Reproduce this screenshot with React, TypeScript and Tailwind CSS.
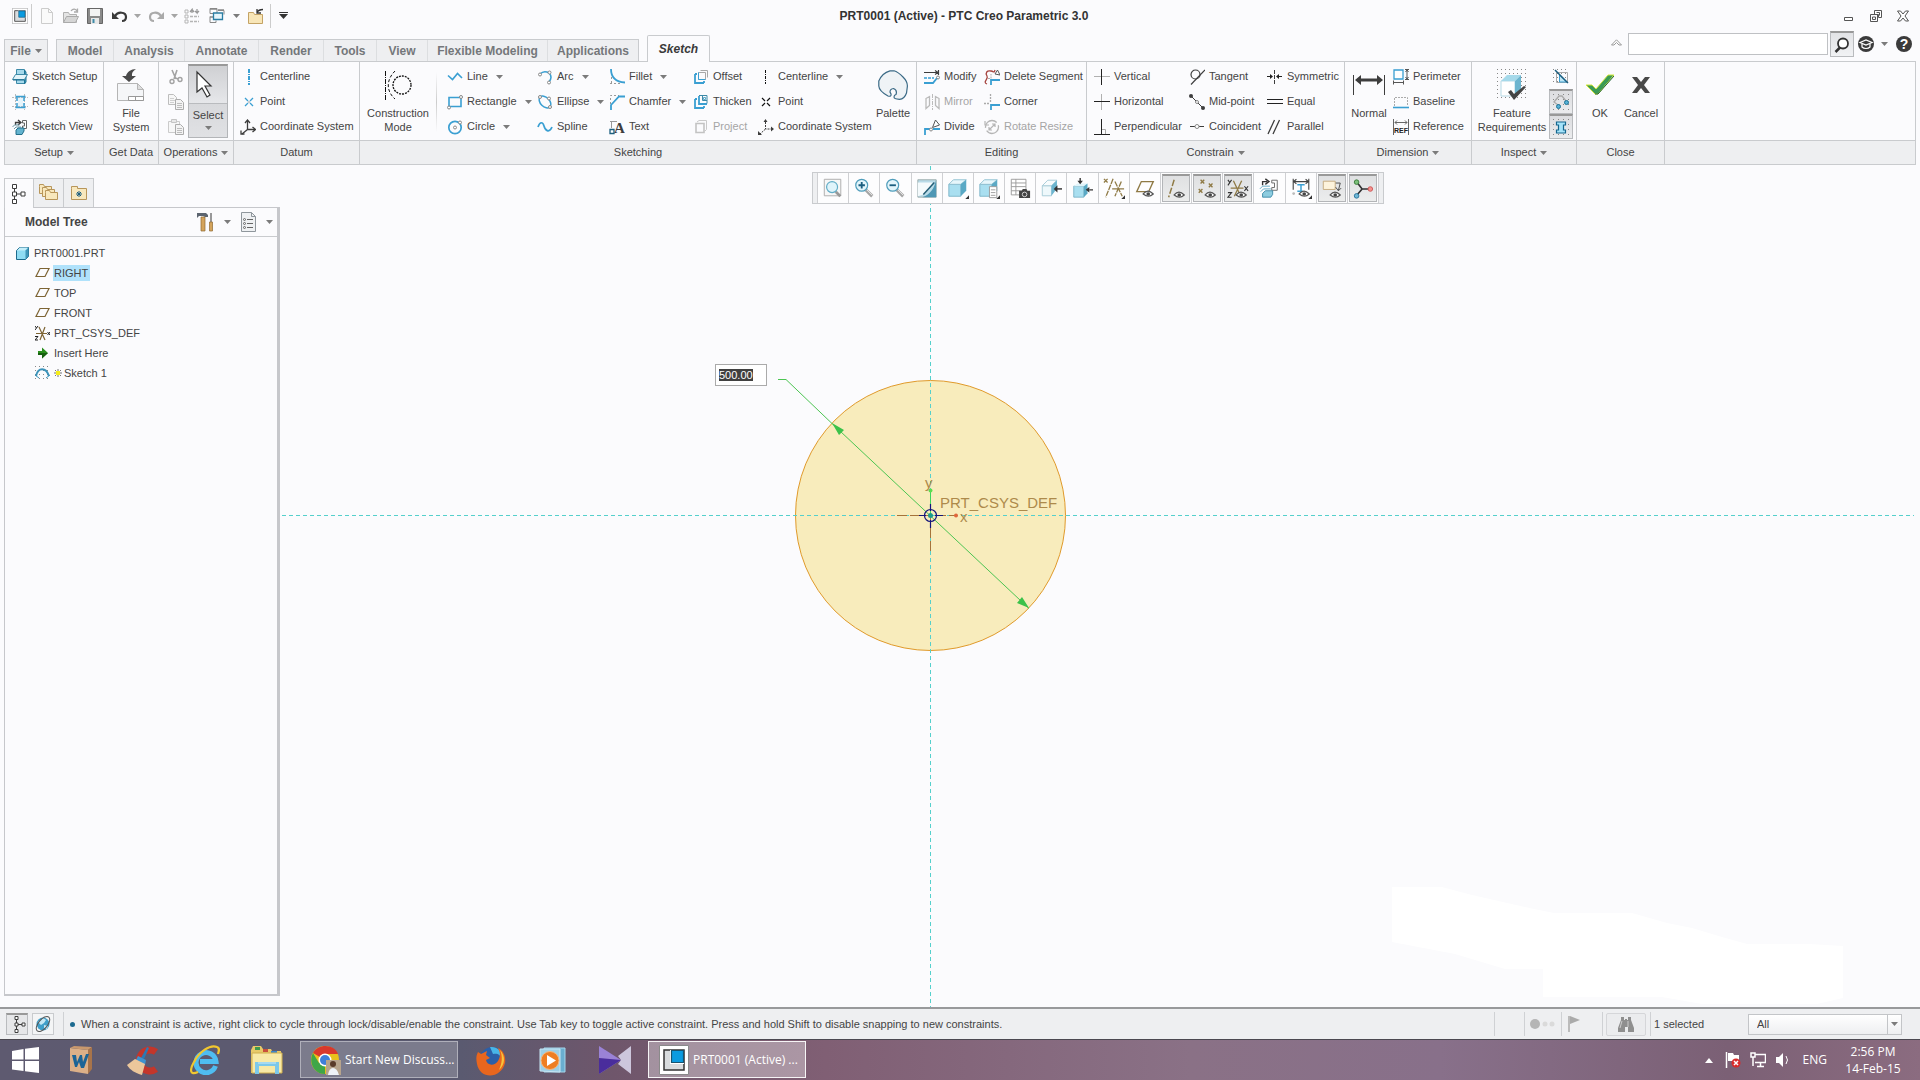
import React, { useEffect, useRef } from 'react';

type Children = { children?: React.ReactNode };

/* ---------- Shared drawing helpers ---------- */

const Svg: React.FC<Children & { w?: number; h?: number }> = ({ w = 16, h = w, children }) => (
  <svg width={w} height={h} viewBox={`0 0 ${w} ${h}`} fill="none" className="block shrink-0" aria-hidden="true">
    {children}
  </svg>
);

const Caret: React.FC<{ light?: boolean }> = ({ light }) => (
  <Svg w={7} h={4}>
    <path d="M0 0h7L3.5 4z" fill={light ? '#a5a5a5' : '#7b7b7b'} />
  </Svg>
);

const BLUE = '#3a9fd2';
const DARK = '#3d3d3d';
const GRAY = '#a3a3a3';

/* ---------- 16px ribbon icons ---------- */

const icons = {
  sketchSetup: (
    <Svg>
      <path d="M4.5.5h8v14h-8z" fill="#a5d9ec" stroke="#3d8aa8" />
      <path d="M12.5 1l1.5 2v10l-1.500 2z" fill="#4b9fbd" stroke="#1d7597" />
      <path d="M3.5 5.5h12l-3 5H.5z" fill="#e3f4fa" stroke="#3d8aa8" />
      <path d="M1 11h11" stroke="#1d6b8d" />
    </Svg>
  ),
  references: (
    <Svg>
      <path d="M0 3.5h16M0 12.5h16M3.5 0v16M12.5 0v16" stroke="#bbb" strokeDasharray="2 1" />
      <path d="M3.5 2.5h10M3.5 13.5h10M5 3v4M5 9v5M12 3v4M12 9v5" stroke={BLUE} strokeWidth="1.500" />
      <path d="M6 4h5v8H6z" fill="#e6f4fb" />
    </Svg>
  ),
  sketchView: (
    <Svg>
      <path d="M3.5 6V3.5H8M6 1l3 2.5L6 6" stroke={DARK} strokeWidth="1.300" />
      <path d="M10.5 1.5h4v8h-4V7h2V4h-2z" fill="#fff" stroke="#666" />
      <path d="M.5 8l2-2h5M2 10l2-2h5" stroke="#6d97a5" />
      <path d="M4 11l2-2h6v3l-2 3.500H4z" fill="#63b3cf" stroke="#236f8a" />
    </Svg>
  ),
  cut: (
    <Svg>
      <path d="M4 1l4 9M9 1L6 10" stroke={GRAY} strokeWidth="1.600" />
      <circle cx="4" cy="12.500" r="2" stroke={GRAY} strokeWidth="1.400" />
      <circle cx="12" cy="10.500" r="2" stroke={GRAY} strokeWidth="1.400" />
      <path d="M7 9l3.5 1" stroke={GRAY} strokeWidth="1.500" />
    </Svg>
  ),
  copy: (
    <Svg>
      <path d="M.5.5h5l3 3v7h-8z" fill="#f7f7f7" stroke="#bdbdbd" />
      <path d="M2 4.5h4M2 6.5h5M2 8.500h4" stroke="#cfcfcf" />
      <path d="M7.500 5.5h5l3 3v7h-8z" fill="#f3f3f3" stroke="#acacac" />
      <path d="M9 9.500h5M9 11.500h5M9 13.500h5" stroke="#bdbdbd" />
    </Svg>
  ),
  paste: (
    <Svg>
      <path d="M.5 2.500h11v11H.5z" fill="#f7f7f7" stroke="#cbcbcb" />
      <path d="M3.500.5h5v3h-5z" fill="#e8e8e8" stroke="#c5c5c5" />
      <path d="M7.500 5.500h5l3 3v7h-8z" fill="#f3f3f3" stroke="#acacac" />
      <path d="M9 9.500h5M9 11.500h5M9 13.500h5" stroke="#bdbdbd" />
    </Svg>
  ),
  centerline: (
    <Svg>
      <path d="M9 0v16" stroke={BLUE} strokeWidth="2" strokeDasharray="4 1 1 1" />
    </Svg>
  ),
  point: (
    <Svg>
      <path d="M5 4l3 3M13 4l-3 3M5 12l3-3M13 12l-3-3" stroke={BLUE} strokeWidth="1.300" />
      <path d="M8.500 7.500h1v1h-1z" fill={DARK} />
    </Svg>
  ),
  csys: (
    <Svg>
      <path d="M7.500 2v8.500H15M7.500 10.500L2 15" stroke={DARK} strokeWidth="1.300" />
      <path d="M5 4l2.500-3L10 4M12.500 8l3 2.500-3 2.500M1 11.500V15h3.500" stroke={DARK} strokeWidth="1.300" />
    </Svg>
  ),
  line: (
    <Svg>
      <path d="M1 6.500l4.500 4 5-6L15 9" stroke={BLUE} strokeWidth="1.600" />
    </Svg>
  ),
  rectangle: (
    <Svg>
      <path d="M2 3.500h12v9H2z" stroke={BLUE} strokeWidth="1.600" />
      <circle cx="2" cy="13.500" r="1.500" fill="#fff" stroke="#888" />
      <circle cx="14" cy="3" r="1.500" fill="#fff" stroke="#888" />
    </Svg>
  ),
  circle: (
    <Svg>
      <circle cx="8" cy="8.500" r="6.200" stroke={BLUE} strokeWidth="1.700" />
      <circle cx="8" cy="8.500" r="1.500" stroke="#888" />
      <circle cx="13" cy="3.500" r="1.500" fill="#fff" stroke="#888" />
    </Svg>
  ),
  arc: (
    <Svg>
      <path d="M3 5Q7 1 12 4q4 4 0 9" stroke={BLUE} strokeWidth="1.500" />
      <circle cx="3" cy="5.500" r="1.500" fill="#fff" stroke="#888" />
      <circle cx="12.500" cy="3.500" r="1.500" fill="#fff" stroke="#888" />
      <circle cx="12" cy="13.500" r="1.500" fill="#fff" stroke="#888" />
    </Svg>
  ),
  ellipse: (
    <Svg>
      <ellipse cx="8" cy="8" rx="7" ry="4.500" transform="rotate(45 8 8)" stroke={BLUE} strokeWidth="1.500" />
      <circle cx="3" cy="3" r="1.500" fill="#fff" stroke="#888" />
      <circle cx="12" cy="4.500" r="1.500" fill="#fff" stroke="#888" />
      <circle cx="13" cy="13" r="1.500" fill="#fff" stroke="#888" />
    </Svg>
  ),
  spline: (
    <Svg>
      <path d="M1 8c2-6 5-5 6-1s5 8 8 1" stroke={BLUE} strokeWidth="1.700" />
    </Svg>
  ),
  fillet: (
    <Svg>
      <path d="M2.500 4v12M1 14.500h10" stroke="#999" strokeDasharray="2 2" />
      <path d="M2 0c0 8 4 13 14 13.500" stroke={BLUE} strokeWidth="1.800" />
    </Svg>
  ),
  chamfer: (
    <Svg>
      <path d="M1.500 10V1.500H10" stroke="#999" strokeDasharray="2 2" />
      <path d="M2 16v-5l8-8.500h6" stroke={BLUE} strokeWidth="1.800" />
    </Svg>
  ),
  text: (
    <Svg>
      <path d="M2.500 9V2.500H8M1 2.500h3" stroke="#999" />
      <text x="5" y="14" fontSize="15" fontWeight="700" fill={DARK} className="font-['Liberation_Serif',serif]">A</text>
      <path d="M1 10.500h4v4H1z" fill="#fff" stroke="#1c5f80" strokeWidth="1.300" />
    </Svg>
  ),
  offset: (
    <Svg>
      <path d="M2 5v9h9M2 5h2M11 14v-2" stroke={BLUE} strokeWidth="1.800" />
      <path d="M5.500 3.500h7v7h-7zM7.500 1.500h7v7" stroke="#a8a8a8" />
      <path d="M5.500 3.500v7h7" stroke={BLUE} />
    </Svg>
  ),
  thicken: (
    <Svg>
      <path d="M2 5v9h9M2 5h2M11 14v-2M6 2v8h8" stroke={BLUE} strokeWidth="1.800" />
      <path d="M6 1.500h8v8M9.500 2v4.500H14" stroke="#3d8aa8" />
      <path d="M10.500 3.500h2v2h-2z" fill="#fff" stroke="#5ba8c7" />
    </Svg>
  ),
  project: (
    <Svg>
      <path d="M3 4.500h8v9H3z" stroke="#c3c3c3" strokeWidth="1.600" />
      <path d="M4 3l2-1.500h7.500v9l-2 2" stroke="#cacaca" />
    </Svg>
  ),
  centerlineDark: (
    <Svg>
      <path d="M7.500 1v14" stroke="#111" strokeDasharray="3 1 1 1" />
    </Svg>
  ),
  pointDark: (
    <Svg>
      <path d="M4 4l3 3M12 4L9 7M4 12l3-3M12 12L9 9" stroke="#111" strokeWidth="1.200" />
    </Svg>
  ),
  csysDark: (
    <Svg>
      <path d="M7.500 3v7H14M7.500 10L2 15" stroke={DARK} strokeDasharray="2 1" />
      <path d="M5.500 3l2-3 2 3zM13 7.500l3 2.500-3 2.500zM0 16v-4l4 4z" fill={DARK} />
    </Svg>
  ),
  modify: (
    <Svg>
      <path d="M0 3.500h14M14.500 1v5M11 1.500l3 2-3 2" stroke={DARK} strokeWidth="1.200" />
      <path d="M0 9h10" stroke={BLUE} strokeWidth="1.300" strokeDasharray="3 1" />
      <path d="M0 14h9l4-5" stroke={BLUE} strokeWidth="1.800" />
      <circle cx="14" cy="8.500" r="1.500" stroke="#888" />
    </Svg>
  ),
  mirror: (
    <Svg>
      <path d="M8.500 0v16" stroke="#bbb" strokeDasharray="4 1 1 1" />
      <path d="M2 4.500l3.500-2v9l-3.500 3zM15 4.500l-3.500-2v9l3.500 3z" stroke="#bbb" strokeWidth="1.300" />
    </Svg>
  ),
  divide: (
    <Svg>
      <path d="M1 16v-6h5M9 10h7" stroke={BLUE} strokeWidth="1.800" />
      <circle cx="7" cy="10.500" r="1.500" fill="#fff" stroke="#888" />
      <path d="M8.500 8.500l3-7.500 4 5z" fill="#fff" stroke="#555" />
    </Svg>
  ),
  deleteSegment: (
    <Svg>
      <path d="M3 15c-5-2 2-5 0-8s0-6 4-5 3 2 4-1" stroke="#a6443f" strokeWidth="1.300" />
      <path d="M7 16v-5h9" stroke={BLUE} strokeWidth="1.800" />
      <path d="M4 9.500h3V5" stroke="#aaa" strokeDasharray="2 1" />
      <path d="M11 5l2.500-4L16 6z" fill="#fff" stroke="#555" />
    </Svg>
  ),
  corner: (
    <Svg>
      <path d="M6.500 0v8M0 9.500h6" stroke="#aaa" strokeWidth="1.300" strokeDasharray="2 1" />
      <path d="M7 16v-5h9" stroke={BLUE} strokeWidth="1.800" />
    </Svg>
  ),
  rotateResize: (
    <Svg>
      <circle cx="8" cy="8" r="6.500" stroke="#b5b5b5" strokeWidth="1.300" strokeDasharray="16 3" />
      <path d="M5 11l6-6M5 8v3h3M11 8V5H8M1 2v4h4" stroke="#b5b5b5" strokeWidth="1.200" />
    </Svg>
  ),
  vertical: (
    <Svg>
      <path d="M0 7.500h16" stroke="#b0b0b0" />
      <path d="M7.500 0v16" stroke="#222" />
    </Svg>
  ),
  horizontal: (
    <Svg>
      <path d="M7.500 0v16" stroke="#b0b0b0" />
      <path d="M0 7.500h16" stroke="#222" />
    </Svg>
  ),
  perpendicular: (
    <Svg>
      <path d="M7.500 0v15M0 15.500h16" stroke="#222" />
      <path d="M8 10.500h3.500V15" stroke="#aaa" />
    </Svg>
  ),
  tangent: (
    <Svg>
      <circle cx="6.500" cy="5.500" r="4.500" stroke={DARK} strokeWidth="1.200" />
      <path d="M2 15.500L16 1" stroke={DARK} strokeWidth="1.200" />
    </Svg>
  ),
  midpoint: (
    <Svg>
      <path d="M2 2l12 12" stroke={DARK} />
      <circle cx="2" cy="2" r="2" fill={DARK} />
      <circle cx="14" cy="14" r="2" fill={DARK} />
      <circle cx="8" cy="8" r="1.500" fill="#fff" stroke="#888" />
    </Svg>
  ),
  coincident: (
    <Svg>
      <path d="M1 7.500h14" stroke={DARK} />
      <circle cx="8" cy="7.500" r="2" fill="#fff" stroke="#888" />
    </Svg>
  ),
  symmetric: (
    <Svg>
      <path d="M7.500 1v14" stroke={DARK} strokeDasharray="4 1" />
      <path d="M0 7.500h5M10 7.500h5" stroke="#222" />
      <path d="M3 5l3 2.500L3 10zM12 5L9 7.500l3 2.500z" fill="#222" />
    </Svg>
  ),
  equal: (
    <Svg>
      <path d="M0 5.500h16M0 9.500h16" stroke="#222" />
    </Svg>
  ),
  parallel: (
    <Svg>
      <path d="M1 15L7.500 1M6 15l6.500-14" stroke={DARK} strokeWidth="1.300" />
    </Svg>
  ),
  perimeter: (
    <Svg>
      <path d="M1 1h9v9H1z" fill="#fff" stroke={BLUE} strokeWidth="1.300" />
      <path d="M14 1v9M12 .5h4M12 10.500h4M12.500 3L14 1l1.500 2M12.500 8l1.500 2 1.500-2M1 13.500h9M.5 11.500v4M10.500 11.500v4" stroke="#555" />
    </Svg>
  ),
  baseline: (
    <Svg>
      <path d="M1.500 12V3.500h13V12" stroke="#aaa" strokeDasharray="2 1" />
      <path d="M0 13.500h16" stroke={BLUE} strokeWidth="1.600" />
    </Svg>
  ),
  reference: (
    <Svg>
      <path d="M.5 0v16M15.500 0v16M2 3.500h12M4 1.500l-2 2 2 2M12 1.500l2 2-2 2" stroke="#666" />
      <text x="1" y="14" fontSize="7" fontWeight="700" fill="#222" className="font-['Liberation_Sans',sans-serif]">REF</text>
    </Svg>
  ),
};

const Dots: React.FC<{ n: number; step: number }> = ({ n, step }) => (
  <g fill="#888">
    {Array.from({ length: n * n }, (_, i) => (
      <rect key={i} x={(i % n) * step} y={Math.floor(i / n) * step} width="1" height="1" />
    ))}
  </g>
);

/* ---------- Ribbon building blocks ---------- */

type Item = { icon: keyof typeof icons; label: string; menu?: boolean; disabled?: boolean };

const Column: React.FC<{ items: Item[]; className: string }> = ({ items, className }) => (
  <div className={`flex shrink-0 flex-col ${className}`}>
    {items.map((item) => (
      <button
        key={item.label}
        disabled={item.disabled}
        className="flex h-[25px] items-center gap-1 whitespace-nowrap text-left text-[#444] disabled:text-[#a5a5a5]"
      >
        {icons[item.icon]}
        <span>{item.label}</span>
        {item.menu && <span className="ml-1"><Caret /></span>}
      </button>
    ))}
  </div>
);

const BigButton: React.FC<Children & { lines: string[]; className: string }> = ({ lines, className, children }) => (
  <button className={`flex shrink-0 flex-col items-center leading-[14px] text-[#444] ${className}`}>
    <span className="flex h-[42px] items-center justify-center">{children}</span>
    {lines.map((l) => (
      <span key={l} className="whitespace-nowrap">{l}</span>
    ))}
  </button>
);

const Group: React.FC<Children & { title: string; menu?: boolean; className: string; body?: string }> = ({
  title,
  menu,
  className,
  body = '',
  children,
}) => (
  <section className={`flex shrink-0 flex-col border-r border-[#c9cbce] ${className}`}>
    <div className={`flex h-[78px] pt-[2px] ${body}`}>{children}</div>
    <button className="flex h-[24px] items-center justify-center gap-1 border-t border-[#c9cbce] bg-[#eeeff1] text-[#444]">
      {title}
      {menu && <Caret />}
    </button>
  </section>
);

/* ---------- Title bar ---------- */

const AppLogo: React.FC<{ size?: number }> = ({ size = 16 }) => (
  <svg width={size} height={size} viewBox="0 0 30 30" className="block shrink-0" aria-hidden="true">
    <path d="M.5.5h29v29H.5z" fill="#fff" stroke="#8a8a8a" />
    <path d="M5 5h20v20H5z" fill="#d8dbdd" stroke="#333" strokeWidth="1.500" />
    <path d="M11 5h14v14H11z" fill="#fff" />
    <path d="M12.500 5.500h12v12h-12z" fill="#0a9be0" stroke="#17536f" strokeWidth="1.200" />
  </svg>
);

const TitleBar = () => (
  <header className="grid h-[31px] shrink-0 grid-cols-[1fr_auto_1fr] items-center pl-3 pr-1">
    <div className="flex items-center">
      <AppLogo />
      <span className="mx-[3px] h-6 w-px bg-[#ccc]" />
      <button className="flex w-6 justify-center" title="New">
        <Svg>
          <path d="M2.500.5h7l4 4v11h-11z" fill="#fafafa" stroke="#ccc" />
          <path d="M9.500.5v4h4" stroke="#ccc" />
        </Svg>
      </button>
      <button className="flex w-6 justify-center" title="Open">
        <Svg>
          <path d="M.5 4.500h5l1 2h7v8H.5z" fill="#e4e4e4" stroke="#b0b0b0" />
          <path d="M3.500 8.500h12l-3 6H.5z" fill="#d5d5d5" stroke="#aaa" />
          <path d="M8 3c2-3 5-2 6 0M14.500.5V4H11" stroke="#aaa" strokeWidth="1.300" />
        </Svg>
      </button>
      <button className="flex w-6 justify-center" title="Save">
        <Svg>
          <path d="M.5.5h15v15H.5z" fill="#8a8a8a" stroke="#666" />
          <path d="M3 1h10v7H3z" fill="#f3f3f3" />
          <path d="M4 10h8v6H4z" fill="#e8e8e8" />
          <path d="M5.500 11h2v4h-2z" fill="#3e8aa8" />
        </Svg>
      </button>
      <button className="flex w-[25px] justify-center" title="Undo">
        <Svg>
          <path d="M3 8c3-5 11-4 11 1 0 3-2 4-4 4" stroke="#3a3a3a" strokeWidth="2.200" />
          <path d="M0 4v7h7z" fill="#3a3a3a" />
        </Svg>
      </button>
      <button className="flex w-[10px] justify-center" title="Undo list"><Caret light /></button>
      <button className="flex w-7 justify-center" title="Redo">
        <Svg>
          <path d="M13 8C10 3 2 4 2 9c0 3 2 4 4 4" stroke="#aaa" strokeWidth="2.200" />
          <path d="M16 4v7H9z" fill="#aaa" />
        </Svg>
      </button>
      <button className="flex w-2 justify-center" title="Redo list"><Caret light /></button>
      <button className="flex w-7 justify-center" title="Regenerate">
        <Svg>
          <path d="M1 2h3v3H1zM1 7h3v3H1zM1 12h3v3H1z" stroke="#b5b5b5" />
          <path d="M6 8.500h9M6 13.500h9" stroke="#b5b5b5" strokeWidth="1.500" strokeDasharray="3 1" />
          <path d="M8 5V1.500L6 4M8 1.500L10 4M13 1v4l-2-2M13 5l2-2" stroke="#999" strokeWidth="1.300" />
        </Svg>
      </button>
      <button className="flex w-[22px] justify-center" title="Windows">
        <Svg>
          <path d="M1 .5h7v5H1zM9 2.500h6v4M1 8.500v6h6v-2" stroke="#888" />
          <path d="M1 1h7M9 2h6M1 9h3" stroke="#888" strokeWidth="1.500" />
          <path d="M4.500 5h9v6.500h-9z" fill="#e6f5fb" stroke="#2a7da3" strokeWidth="1.300" />
        </Svg>
      </button>
      <button className="flex w-4 justify-center" title="Window list"><Caret /></button>
      <button className="flex w-6 justify-center" title="Close window">
        <Svg>
          <path d="M.5 4.500h5l1 2h8v9H.5z" fill="#f8e6b8" stroke="#c4a365" />
          <path d="M9 4.500c1-2 3-3 6-3M9 1v4h4" stroke="#333" strokeWidth="1.300" />
        </Svg>
      </button>
      <span className="ml-0.5 h-6 w-px bg-[#ccc]" />
      <button className="flex w-6 justify-center" title="Customize">
        <Svg w={9} h={7}>
          <path d="M0 .5h9" stroke="#333" />
          <path d="M0 2h9L4.500 7z" fill="#333" />
        </Svg>
      </button>
    </div>
    <h1 className="text-xs font-bold text-[#333]">PRT0001 (Active) - PTC Creo Parametric 3.0</h1>
    <div className="flex items-center justify-end">
      <button className="flex w-[27px] justify-center" title="Minimize">
        <Svg w={10} h={10}><path d="M.5 6.500h8v3h-8z" fill="#fff" stroke="#555" /></Svg>
      </button>
      <button className="flex w-[27px] justify-center" title="Restore">
        <Svg w={12}>
          <path d="M4.500.5h7v7h-3v-3h-4z" fill="#fff" stroke="#555" />
          <path d="M.5 4.500h7v7h-7zM2.500 7h3v2.500h-3z" stroke="#555" />
          <path d="M6.500 2.500h3v3" stroke="#555" />
        </Svg>
      </button>
      <button className="flex w-[27px] justify-center" title="Close">
        <Svg w={12}>
          <path d="M.5 1h3L6 4l2.500-3h3L8 6l3.500 5h-3L6 8l-2.500 3h-3L4 6z" fill="#fff" stroke="#555" />
        </Svg>
      </button>
    </div>
  </header>
);

const TABS = [
  { label: 'Model', w: 'w-[57px]' },
  { label: 'Analysis', w: 'w-[71px]' },
  { label: 'Annotate', w: 'w-[74px]' },
  { label: 'Render', w: 'w-[65px]' },
  { label: 'Tools', w: 'w-[53px]' },
  { label: 'View', w: 'w-[51px]' },
  { label: 'Flexible Modeling', w: 'w-[120px]' },
  { label: 'Applications', w: 'w-[90px]' },
];

const TabRow = () => (
  <div className="mx-1 flex h-[30px] shrink-0 items-end text-xs font-bold text-[#74777a]">
    <button className="flex h-[22px] w-11 items-center justify-center gap-1 border-x border-t border-[#c9cbce] bg-[#eeeff1]">
      File <Caret />
    </button>
    <nav className="ml-2 flex border-x border-t border-[#c9cbce] bg-[#eeeff1]">
      {TABS.map((t) => (
        <button key={t.label} className={`h-[21px] border-r border-[#dcdee0] last:border-r-0 ${t.w}`}>
          {t.label}
        </button>
      ))}
    </nav>
    <button className="relative z-10 ml-2 -mb-px h-[27px] w-[63px] rounded-t-xs border-x border-t border-[#c9cbce] bg-[#fbfbfd] text-[#3a3a3a] italic">
      Sketch
    </button>
    <div className="ml-auto flex items-center self-center pb-1">
      <button className="px-1.5 pb-1" title="Minimize the ribbon">
        <Svg w={11} h={7}>
          <path d="M.5 6L5.500.8 10.500 6H8L5.500 3.500 3 6z" fill="#fff" stroke="#999" />
        </Svg>
      </button>
      <input aria-label="Command search" className="h-[22px] w-[200px] border border-[#bfc1c4] bg-white px-1 text-[11px] font-normal outline-none" />
      <button title="Search" className="ml-0.5 flex h-[26px] w-6 items-center justify-center border border-t-2 border-[#b9bbbe] border-t-[#999] bg-gradient-to-b from-[#e2e3e6] to-[#f1f2f4]">
        <Svg>
          <circle cx="9" cy="6.500" r="5" fill="#fff" stroke="#333" strokeWidth="1.800" />
          <path d="M6 10.500L1.500 15" stroke="#333" strokeWidth="2.500" />
        </Svg>
      </button>
      <button title="Learning Connector" className="ml-1 flex">
        <Svg>
          <circle cx="8" cy="8" r="8" fill="#3b3b3b" />
          <path d="M2 6.500L8 4l6 2.500L8 9z" stroke="#fff" strokeWidth="1.200" />
          <path d="M4 8v3c2 2 6 2 8 0V8" stroke="#fff" strokeWidth="1.200" />
        </Svg>
      </button>
      <button title="Learning menu" className="flex w-5 justify-center"><Caret /></button>
      <button title="Help" className="mr-1 ml-0.5 flex h-4 w-4 items-center justify-center rounded-full bg-[#3b3b3b] text-sm text-white">?</button>
    </div>
  </div>
);

/* ---------- Ribbon ---------- */

const SmallIcon: React.FC<Children & { title: string; pressed?: boolean }> = ({ title, pressed, children }) => (
  <button
    title={title}
    className={
      pressed
        ? 'flex h-[25px] w-6 items-center justify-center border border-t-2 border-[#b9bbbe] border-t-[#999] bg-gradient-to-b from-[#dcdde0] to-[#ebecee]'
        : 'flex h-[25px] w-6 items-center justify-center'
    }
  >
    {children}
  </button>
);

const Ribbon = () => (
  <div className="mx-1 flex shrink-0 overflow-hidden border border-[#c9cbce]">
    <Group title="Setup" menu className="w-[99px]" body="pl-[7px]">
      <Column
        className="w-[88px]"
        items={[
          { icon: 'sketchSetup', label: 'Sketch Setup' },
          { icon: 'references', label: 'References' },
          { icon: 'sketchView', label: 'Sketch View' },
        ]}
      />
    </Group>
    <Group title="Get Data" className="w-[55px]" body="justify-center">
      <BigButton lines={['File', 'System']} className="w-12">
        <Svg w={30} h={32}>
          <path d="M6 7h4C11 3 15 0 20 0c-4 3-4 4-4 7h4l-7 6z" fill="#4a4a4a" />
          <path d="M1.500 14.500h20l6 6v11h-26z" fill="#f5f6f8" stroke="#b5b5b5" />
          <path d="M21.500 14.500l6 6h-6z" fill="#ddd" stroke="#b5b5b5" />
          <path d="M12.500 27.500h15v4h-15zM19.500 27.500v4" fill="#fff" stroke="#999" />
        </Svg>
      </BigButton>
    </Group>
    <Group title="Operations" menu className="w-[75px]" body="justify-end gap-1 pr-[5px]">
      <div className="flex flex-col">
        {(['cut', 'copy', 'paste'] as const).map((k) => (
          <button key={k} title={k} disabled className="flex h-[25px] w-4 items-center">{icons[k]}</button>
        ))}
      </div>
      <button className="flex h-[74px] w-10 flex-col items-center border border-t-2 border-[#b3b5b8] border-t-[#999] bg-gradient-to-b from-[#cfd0d3] to-[#e0e1e4] text-[#444]">
        <span className="flex h-[38px] w-full items-center justify-center border-b border-[#b9bbbe] bg-gradient-to-b from-[#cfd0d3] to-[#e6e7ea] pr-2">
          <Svg w={18} h={29}>
            <path d="M2 2v20l5-4 5 9 3-2-5-9h6z" fill="#fff" stroke="#333" strokeWidth="1.200" />
          </Svg>
        </span>
        <span className="pt-1 pb-1 leading-[14px]">Select</span>
        <Caret />
      </button>
    </Group>
    <Group title="Datum" className="w-[126px]" body="pl-1.5">
      <Column
        className="w-[116px]"
        items={[
          { icon: 'centerline', label: 'Centerline' },
          { icon: 'point', label: 'Point' },
          { icon: 'csys', label: 'Coordinate System' },
        ]}
      />
    </Group>
    <Group title="Sketching" className="w-[557px]">
      <BigButton lines={['Construction', 'Mode']} className="w-[76px]">
        <Svg w={28} h={32}>
          <path d="M1.500 2v29" stroke="#111" strokeDasharray="5 1 1 1" />
          <path d="M11 2c-9 9-9 20 0 28" stroke="#111" strokeDasharray="3 2" />
          <circle cx="18" cy="16" r="9" stroke="#111" strokeWidth="1.300" strokeDasharray="2 1" />
        </Svg>
      </BigButton>
      <span className="mr-[10px] h-[60px] w-px self-center bg-gradient-to-b from-transparent via-[#ccc] to-transparent" />
      <Column
        className="w-[90px]"
        items={[
          { icon: 'line', label: 'Line', menu: true },
          { icon: 'rectangle', label: 'Rectangle', menu: true },
          { icon: 'circle', label: 'Circle', menu: true },
        ]}
      />
      <Column
        className="w-[72px]"
        items={[
          { icon: 'arc', label: 'Arc', menu: true },
          { icon: 'ellipse', label: 'Ellipse', menu: true },
          { icon: 'spline', label: 'Spline' },
        ]}
      />
      <Column
        className="w-[84px]"
        items={[
          { icon: 'fillet', label: 'Fillet', menu: true },
          { icon: 'chamfer', label: 'Chamfer', menu: true },
          { icon: 'text', label: 'Text' },
        ]}
      />
      <Column
        className="w-[65px]"
        items={[
          { icon: 'offset', label: 'Offset' },
          { icon: 'thicken', label: 'Thicken' },
          { icon: 'project', label: 'Project', disabled: true },
        ]}
      />
      <Column
        className="w-[112px]"
        items={[
          { icon: 'centerlineDark', label: 'Centerline', menu: true },
          { icon: 'pointDark', label: 'Point' },
          { icon: 'csysDark', label: 'Coordinate System' },
        ]}
      />
      <BigButton lines={['Palette']} className="w-[46px]">
        <Svg w={30}>
          <path
            d="M12 .8h4Q20 2 25 7q5 5 4.300 10l-.8 6q-2 6-7 6.300-5.500-.3-5.500-2.300 0-2 2-2.500 1.500-4.500-2.500-6-3.500.5-3.500 3.500l1 2q.5 3-3 2Q1 21 .8 16v-5Q4 3 12 .8z"
            fill="#eff3f6"
            stroke="#3b6a86"
            strokeWidth="1.200"
          />
        </Svg>
      </BigButton>
    </Group>
    <Group title="Editing" className="w-[170px]" body="pl-[7px]">
      <Column
        className="w-[60px]"
        items={[
          { icon: 'modify', label: 'Modify' },
          { icon: 'mirror', label: 'Mirror', disabled: true },
          { icon: 'divide', label: 'Divide' },
        ]}
      />
      <Column
        className="w-[100px]"
        items={[
          { icon: 'deleteSegment', label: 'Delete Segment' },
          { icon: 'corner', label: 'Corner' },
          { icon: 'rotateResize', label: 'Rotate Resize', disabled: true },
        ]}
      />
    </Group>
    <Group title="Constrain" menu className="w-[258px]" body="pl-[7px]">
      <Column
        className="w-[95px]"
        items={[
          { icon: 'vertical', label: 'Vertical' },
          { icon: 'horizontal', label: 'Horizontal' },
          { icon: 'perpendicular', label: 'Perpendicular' },
        ]}
      />
      <Column
        className="w-[78px]"
        items={[
          { icon: 'tangent', label: 'Tangent' },
          { icon: 'midpoint', label: 'Mid-point' },
          { icon: 'coincident', label: 'Coincident' },
        ]}
      />
      <Column
        className="w-[74px]"
        items={[
          { icon: 'symmetric', label: 'Symmetric' },
          { icon: 'equal', label: 'Equal' },
          { icon: 'parallel', label: 'Parallel' },
        ]}
      />
    </Group>
    <Group title="Dimension" menu className="w-[127px]">
      <BigButton lines={['Normal']} className="w-12">
        <Svg w={32} h={32}>
          <path d="M.5 6v20M31.500 6v20" stroke={DARK} />
          <path d="M5 11h22" stroke={DARK} strokeWidth="3" />
          <path d="M2 11l6-5v10zM30 11l-6-5v10z" fill={DARK} />
        </Svg>
      </BigButton>
      <Column
        className="w-[74px]"
        items={[
          { icon: 'perimeter', label: 'Perimeter' },
          { icon: 'baseline', label: 'Baseline' },
          { icon: 'reference', label: 'Reference' },
        ]}
      />
    </Group>
    <Group title="Inspect" menu className="w-[105px]" body="justify-end pr-[3px]">
      <BigButton lines={['Feature', 'Requirements']} className="w-[74px]">
        <Svg w={30} h={32}>
          <Dots n={8} step={4} />
          <path d="M4 12h14v15H4z" fill="#fff" stroke="#b5d9e5" />
          <path d="M4 12l6-6h14l-6 6z" fill="#a5d9ea" />
          <path d="M18 12l6-6v14l-6 7z" fill="#6cb5cf" />
          <path d="M11 23l3-2 3 4 10-8 2 1-12 13z" fill="#444" />
        </Svg>
      </BigButton>
      <div className="flex flex-col">
        <SmallIcon title="Overlapping geometry">
          <Svg>
            <Dots n={4} step={4} />
            <path d="M3.500 3.500h11v10h-11z" stroke="#aaa" />
            <path d="M6.500 6v7h7z" fill="#bfe6f4" stroke={BLUE} />
            <path d="M2 1l13 13" stroke="#1c5f80" strokeWidth="1.500" />
          </Svg>
        </SmallIcon>
        <SmallIcon title="Highlight open ends" pressed>
          <Svg>
            <Dots n={4} step={5} />
            <path d="M5 11L1 8l5-6h3l4 5" stroke="#aaa" strokeWidth="1.300" />
            <circle cx="5.500" cy="12.500" r="2" fill="#56b0d6" stroke="#1d7597" />
            <circle cx="13.500" cy="8.500" r="2" fill="#56b0d6" stroke="#1d7597" />
          </Svg>
        </SmallIcon>
        <SmallIcon title="Shade closed loops" pressed>
          <Svg>
            <Dots n={4} step={5} />
            <path d="M3.500 3h9v3h-2v5h2v3h-9v-3h2V6h-2z" fill="#a5e3f9" stroke="#14678f" strokeWidth="1.200" />
          </Svg>
        </SmallIcon>
      </div>
    </Group>
    <Group title="Close" className="w-[88px]" body="pl-[3px]">
      <BigButton lines={['OK']} className="w-10">
        <Svg w={28} h={22}>
          <path d="M0 11h6l4 4L22 1h6L12 20H9z" fill="#3a9a55" stroke="#d5e63c" />
          <path d="M9 20h3L28 2" stroke="#22653a" />
        </Svg>
      </BigButton>
      <BigButton lines={['Cancel']} className="w-[42px]">
        <Svg w={20} h={18}>
          <path d="M1 1h5l4 5 4-5h5l-6 8 6 8h-5l-4-5-4 5H1l6-8z" fill="#484848" />
        </Svg>
      </BigButton>
    </Group>
    <div className="flex flex-1 flex-col justify-end">
      <div className="h-6 border-t border-[#c9cbce] bg-[#eeeff1]" />
    </div>
  </div>
);

/* ---------- Model tree ---------- */

const Plane = () => (
  <Svg w={15} h={12}>
    <path d="M5 1.500h9l-4 8H1z" stroke="#7d6434" strokeWidth="1.200" />
  </Svg>
);

const TreeGlyph = () => (
  <Svg w={14} h={20}>
    <path d="M2.500 4v12M4 10h5" stroke={DARK} />
    <path d="M.5.5h4v4h-4zM.5 8h4v4h-4zM.5 15.500h4v4h-4zM9 8h4v4H9z" fill="#fff" stroke={DARK} />
  </Svg>
);

const TREE: { icon: React.ReactNode; label: React.ReactNode; key: string; selected?: boolean }[] = [
  { key: 'right', icon: <Plane />, label: 'RIGHT', selected: true },
  { key: 'top', icon: <Plane />, label: 'TOP' },
  { key: 'front', icon: <Plane />, label: 'FRONT' },
  {
    key: 'csys',
    icon: (
      <Svg w={15} h={16}>
        <path d="M1 8.500h11M4 2l6 13M10 2L5 15" stroke="#7d6434" strokeWidth="1.200" />
        <path d="M0 1l1.500 2L3 1M1.500 3L0 5M0 11.500h3l-3 3.500h3M12.500 7l2.500 3M15 7l-2.500 3" stroke="#222" />
      </Svg>
    ),
    label: 'PRT_CSYS_DEF',
  },
  {
    key: 'insert',
    icon: (
      <Svg w={15} h={16}>
        <path d="M3 6h4V2.500L13 8l-6 5.500V10H3z" fill="#2a8f1d" />
        <path d="M3 8h10l-6 5.500V10H3z" fill="#17600f" />
      </Svg>
    ),
    label: 'Insert Here',
  },
  {
    key: 'sketch',
    icon: (
      <Svg w={15} h={14}>
        <Dots n={4} step={4} />
        <path d="M1 10C3 1 11 1 14 10" stroke="#3b93ba" strokeWidth="2" />
        <path d="M0 9l4 3M15 9l-4 3" stroke="#3b93ba" />
      </Svg>
    ),
    label: (
      <span className="flex items-center gap-0.5">
        <Svg w={8}>
          <path d="M4 0v8M0 4h8M1 1l6 6M7 1L1 7" stroke="#777" />
          <path d="M2 2h4v4H2z" fill="#f6ee1c" />
        </Svg>
        Sketch 1
      </span>
    ),
  },
];

const SidePanel = () => (
  <aside className="relative z-10 mt-[13px] mb-[11px] ml-1 flex w-[276px] shrink-0 flex-col text-[#444]">
    <div className="flex h-[29px]">
      <button title="Model Tree" className="relative z-10 -mb-px flex h-[30px] w-[30px] items-center border-x border-t border-[#c9cbce] bg-[#fbfbfd] pl-[7px]"><TreeGlyph /></button>
      <button title="Folder Browser" className="flex w-[30px] items-center justify-center border-t border-r border-[#c9cbce] bg-[#eeeff1]">
        <Svg w={19} h={20}>
          {[0, 3, 6].map((d) => (
            <path key={d} d={`M${d + 0.5} ${d + 3.5}v-2h4l1 2h7v7h-12z`} fill="#f8e8bd" stroke="#b8965a" />
          ))}
        </Svg>
      </button>
      <button title="Favorites" className="flex w-[30px] items-center justify-center border-t border-r border-[#c9cbce] bg-[#eeeff1]">
        <Svg w={18} h={16}>
          <path d="M1.500 3.500v-2h6v2h9v11h-15z" fill="#f8e8bd" stroke="#b8965a" />
          <path d="M9 6v6M6 9h6M7 7l4 4M11 7l-4 4" stroke="#1c5f80" />
        </Svg>
      </button>
    </div>
    <div className="flex flex-1 flex-col border-t border-l border-r-3 border-b-2 border-[#c6c7cb] bg-[#fbfbfd]">
      <div className="flex h-[29px] shrink-0 items-center border-b border-[#c9cbce] pl-5">
        <h2 className="text-xs font-bold">Model Tree</h2>
        <button title="Settings" className="ml-auto flex items-center gap-2.5">
          <Svg w={17} h={20}>
            <path d="M0 1h9l2 2v2H8L6 4H2L0 6z" fill="#5c6570" />
            <path d="M4 5h4v14H4z" fill="#d4a45c" stroke="#8f6a32" strokeWidth=".7" />
            <path d="M14 1v9" stroke="#777" strokeWidth="1.500" />
            <path d="M12.500 10h3v9h-3z" fill="#d4a45c" stroke="#8f6a32" strokeWidth=".7" />
          </Svg>
          <Caret />
        </button>
        <button title="Show" className="mr-1 flex items-center gap-[9px] pl-2.5">
          <Svg w={16} h={20}>
            <path d="M.5.5h10l4 4v15H.5z" fill="#eff1f3" stroke="#8f969c" />
            <path d="M10.500.5v4h4" stroke="#8f969c" />
            <path d="M6 7.500h6M6 11.500h6M6 15.500h6" stroke="#666" />
            <circle cx="3.500" cy="7.500" r="1" stroke="#666" />
            <circle cx="3.500" cy="11.500" r="1" stroke="#666" />
            <circle cx="3.500" cy="15.500" r="1" stroke="#666" />
          </Svg>
          <Caret />
        </button>
      </div>
      <div className="flex flex-col pt-[6px]">
        <button className="flex h-5 items-center gap-[5px] pl-[11px]">
          <Svg w={13} h={13}>
            <path d="M.5 3.500l3-3h9v9l-3 3h-9z" fill="#8fdcf3" stroke="#1d6b8d" />
            <path d="M9.500 12.500v-9l3-3v9z" fill="#3f95b8" />
            <path d="M1 3.500l3-3h8l-3 3z" fill="#c4eefa" />
          </Svg>
          PRT0001.PRT
        </button>
        <ul>
          {TREE.map((n) => (
            <li key={n.key}>
              <button className="flex h-5 items-center gap-[3px] pl-[30px]">
                {n.icon}
                <span className={n.selected ? 'bg-[#b0e2fb] pr-0.5 pl-px leading-4' : 'pl-px leading-4'}>{n.label}</span>
              </button>
            </li>
          ))}
        </ul>
      </div>
    </div>
  </aside>
);

/* ---------- In-graphics toolbar ---------- */

const Lens: React.FC<Children> = ({ children }) => (
  <>
    <path d="M14 14l7 7" stroke="#a5a5a5" strokeWidth="3.500" />
    <path d="M15 14l6 6" stroke="#eee" />
    <circle cx="9.500" cy="9" r="6.500" fill="#e3f5fb" stroke="#4f9dbb" strokeWidth="1.300" />
    {children}
  </>
);

const Cube = () => (
  <>
    <path d="M2 8h13v13H2z" fill="#a9dff0" stroke="#7bb5c8" />
    <path d="M2 8l5-5h14l-6 5z" fill="#e6f6fb" stroke="#8dc0d0" />
    <path d="M15 8l6-5v12l-6 6z" fill="#5aa9c5" />
  </>
);

const Eye = () => (
  <>
    <path d="M10 18.500q5-6 11 0-5 5-11 0z" fill="#fff" stroke="#555" strokeWidth="1.300" />
    <circle cx="15.500" cy="18.500" r="2" fill="#444" />
  </>
);

const MenuCorner = () => <path d="M24 20v4h-4z" fill="#333" />;

const BROWN = '#8f7a45';

const VIEW_TOOLS: { title: string; pressed?: boolean; art: React.ReactNode }[] = [
  { title: 'Refit', art: <><path d="M2.500 2.500h18v18h-18z" fill="#f7f7f7" stroke="#aaa" /><path d="M15 16l5 5" stroke="#999" strokeWidth="3" /><circle cx="11" cy="11" r="6" fill="#dff4fb" stroke="#62adc7" strokeWidth="1.300" /></> },
  { title: 'Zoom In', art: <Lens><path d="M6 9h7M9.500 5.500v7" stroke="#1c5f80" strokeWidth="2" /></Lens> },
  { title: 'Zoom Out', art: <Lens><path d="M6 9h7" stroke="#1c5f80" strokeWidth="2" /></Lens> },
  { title: 'Repaint', art: <><path d="M2 3h20v19H2z" fill="#b9dbe8" stroke="#9aa" /><path d="M22 3v19H7C16 19 20 12 22 3z" fill="#4f98b5" /><path d="M2 6h16C15 12 12 16 8 19l-6 2z" fill="#f4fafc" /><path d="M20 6L8 19" stroke="#225c74" strokeWidth="1.600" /></> },
  { title: 'Display Style', art: <><Cube /><MenuCorner /></> },
  { title: 'Saved Orientations', art: <><Cube /><path d="M12.500 10.500h8v12h-8z" fill="#fff" stroke="#999" /><path d="M14 14h5M14 17h5M14 20h5" stroke="#999" /><MenuCorner /></> },
  { title: 'View Manager', art: <><path d="M2.500 2.500h16v17h-16zM2.500 6.500h16M2.500 10.500h16M2.500 15h16M7.500 2.500v17" fill="#fff" stroke="#999" /><path d="M11 15h3l1-2h4l1 2h3v8H11z" fill="#444" /><circle cx="17" cy="19" r="2.500" stroke="#ddd" /></> },
  { title: 'Sketch View', art: <><path d="M2.500 9.500h10v11h-10z" fill="#eef8fb" stroke="#a5cad6" /><path d="M2.500 9.500l6-6h10l-6 6z" fill="#f8fcfd" stroke="#a5cad6" /><path d="M12.500 9.500l6-6v9l-6 8z" fill="#6cb5cf" /><path d="M24 13h-6" stroke="#333" strokeWidth="1.600" /><path d="M15 13l4-4v8z" fill="#333" /></> },
  { title: 'Named Views', art: <><path d="M3 10h11v12H3z" fill="#a9dff0" stroke="#7bb5c8" /><path d="M3 10l4-3h11l-4 3z" fill="#e0f4fa" /><path d="M14 10l4-3v11l-4 4z" fill="#5aa9c5" /><path d="M10 1v5M24 14h-4" stroke="#333" strokeWidth="1.500" /><path d="M7 4h6l-3 4zM16 14l4-3v6z" fill="#333" /></> },
  { title: 'Datum Display', art: <><path d="M1 2l4 4M5 2L1 6M11 2L3 22M10 13h13M13 5l8 16M20 5l-7 16" stroke={BROWN} strokeWidth="1.400" strokeDasharray="6 1" /><MenuCorner /></> },
  { title: 'Plane Display', art: <><path d="M8 5h13l-5 11H3z" stroke={BROWN} strokeWidth="1.500" /><Eye /></> },
  { title: 'Axis Display', pressed: true, art: <><path d="M10 2L4 21" stroke={BROWN} strokeWidth="1.600" strokeDasharray="7 2" /><Eye /></> },
  { title: 'Point Display', pressed: true, art: <><path d="M5 2l4 4M9 2L5 6M14 6l4 4M18 6l-4 4M3 12l4 4M7 12l-4 4" stroke={BROWN} strokeWidth="1.500" /><Eye /></> },
  { title: 'Csys Display', pressed: true, art: <><path d="M4 11h14M7 3l8 17M16 3L8 20" stroke={BROWN} strokeWidth="1.400" /><path d="M1 2l2 3 2-3M3 5L1 8M1 16h4l-4 5h4M19 9l4 5M23 9l-4 5" stroke="#333" strokeWidth="1.200" /><Eye /></> },
  { title: 'Sketch Orientation', art: <><path d="M5 9V5h5M8 2l4 3-4 3" stroke="#333" strokeWidth="1.500" /><path d="M15 3.500h6v11h-6v-3h3v-5h-3z" fill="#fff" stroke="#666" /><path d="M2 13l3-3h8M3 16l3-3h8" stroke="#5aa9c5" /><path d="M5 18l3-3h8v4l-2 3H5z" fill="#8cccdf" stroke="#3d8aa8" /></> },
  { title: 'Dimension Display', art: <><path d="M3.500 2v12M20.500 2v12M4 5h16M7 2.500L4 5l3 2.500M17 2.500L20 5l-3 2.500" stroke="#444" strokeWidth="1.200" /><path d="M12 8v8M8 8.500h8M8 15.500h6" stroke="#3a9fd2" strokeWidth="1.600" /><circle cx="4" cy="18" r="1.500" fill="#bbb" /><Eye /><MenuCorner /></> },
  { title: 'Annotation Display', pressed: true, art: <><path d="M2.500 3.500h13v9h-13z" fill="#fdf3dc" stroke="#c4a97c" /><path d="M16 5.500h5l-2 8M16 10l3 4 3-3" stroke="#444" /><Eye /></> },
  { title: 'Spin Center', pressed: true, art: <><path d="M5 4l6 8h9M11 12l-6 7" stroke="#333" strokeWidth="1.800" /><circle cx="5" cy="4.500" r="2.500" fill="#7cc07a" stroke="#3a7a3a" /><circle cx="20" cy="12" r="2.500" fill="#f5918c" stroke="#c55" /><circle cx="5" cy="19.500" r="2.500" fill="#6fb8d6" stroke="#27729a" /></> },
];

const ViewToolbar = () => (
  <div className="relative z-10 flex h-8 w-[572px] border border-[#c9cbce] bg-[#eeeff1] px-1">
    {VIEW_TOOLS.map((t) => (
      <button key={t.title} title={t.title} className="flex flex-1 border-l border-[#cfd0d3] bg-[#fdfdfe] p-px last:border-r">
        <span
          className={
            t.pressed
              ? 'flex h-full w-full items-center justify-center border border-t-2 border-[#b3b5b8] border-t-[#999] bg-gradient-to-b from-[#dfe0e2] to-[#eceded]'
              : 'flex h-full w-full items-center justify-center'
          }
        >
          <svg width="22" height="22" viewBox="0 0 24 24" fill="none" aria-hidden="true">{t.art}</svg>
        </span>
      </button>
    ))}
  </div>
);

/* ---------- Sketch canvas ---------- */

const Sketch = () => (
  <svg className="absolute inset-0 h-full w-full" aria-label="Sketch canvas">
    <path
      d="M1392 722h50l30 8 62 14 20 4h78l35 10 25 5 30 9 25 7h62l34 2v52l-26 6h-115l-40-7h-119v-28h-38l-50-15-63-12z"
      fill="#fff"
    />
    <circle cx="930.5" cy="350.5" r="135" fill="#f8ecbc" stroke="#e09a2b" />
    <path d="M282 350.500h1632M930.500 1v841" stroke="#55d0cc" strokeDasharray="4 3" />
    <path d="M897 350.500h60M930.500 350v36" stroke="#a5733a" strokeDasharray="10 3" />
    <path d="M930.500 350v-25" stroke="#3fd65a" />
    <path d="M778 214.500h8l46 44 98 92 99 93" stroke="#4cc552" fill="none" />
    <path d="M832 258l12 7-5 5zM1029 443l-12-5 5-6z" fill="#3cc24a" />
    <circle cx="930.5" cy="350.5" r="6" fill="none" stroke="#15157a" strokeWidth="1.200" />
    <path d="M930.500 339v7M930.500 355v8M919 350.500h7M935 350.500h8" stroke="#15157a" strokeWidth="1.200" />
    <circle cx="930.5" cy="350.5" r="2.500" fill="#1f9b8e" />
    <circle cx="930.5" cy="325.500" r="2" fill="#5ede4e" />
    <circle cx="956" cy="350.500" r="2" fill="#e0663c" />
    <g className="font-['Liberation_Sans',sans-serif]" fontSize="15" fill="#ad8a4b">
      <text x="925" y="323">y</text>
      <text x="960" y="357">x</text>
      <text x="940" y="343">PRT_CSYS_DEF</text>
    </g>
  </svg>
);

const DimensionInput = () => {
  const ref = useRef<HTMLInputElement>(null);

  useEffect(() => {
    ref.current?.focus();
    ref.current?.select();
  }, []);

  return (
    <input
      ref={ref}
      aria-label="Diameter"
      defaultValue="500.00"
      className="absolute top-[199px] left-[715px] h-[22px] w-[52px] border border-[#aaa] bg-white px-[3px] text-[11px] text-[#333] outline-none selection:bg-[#404040] selection:text-white"
    />
  );
};

/* ---------- Status bar ---------- */

const Rule = () => <span className="h-6 w-px bg-[#cfd1d4]" />;

const StatusBar = () => (
  <footer className="flex h-[33px] shrink-0 items-center border-t-2 border-b border-t-[#98999b] border-b-[#4b4850] bg-[#eeeff1] pl-1.5 text-[#444]">
    <button title="Navigator" className="flex h-[22px] w-[22px] items-center justify-center border border-t-2 border-[#b9bbbe] border-t-[#999] bg-[#e6e7e9] pl-1">
      <Svg w={13} h={17}>
        <path d="M3.500 3v11M5 8.500h4" stroke={DARK} />
        <path d="M2 .5h3v3H2zM2 7h3v3H2zM2 13.500h3v3H2zM9 7h3v3H9z" fill="#fff" stroke={DARK} />
      </Svg>
    </button>
    <button title="Browser" className="mr-[9px] ml-1 flex h-[22px] w-[22px] items-center justify-center border border-[#c9cbce] bg-[#f4f5f6]">
      <Svg w={18}>
        <circle cx="9" cy="9" r="6.500" fill="#3f9fc9" />
        <path d="M4 7l5-4 3 2-2 3-3 2zM10 10l4 1-1 3-3-1z" fill="#c4e8f4" />
        <ellipse cx="9" cy="9" rx="9" ry="4.500" transform="rotate(-50 9 9)" stroke="#555" />
      </Svg>
    </button>
    <Rule />
    <span className="mr-1.5 ml-1.5 h-[5px] w-[5px] rounded-full bg-[#1c6a90]" />
    <p className="flex-1 whitespace-nowrap">
      When a constraint is active, right click to cycle through lock/disable/enable the constraint. Use Tab key to toggle active constraint. Press and hold Shift to disable snapping to new constraints.
    </p>
    <Rule />
    <span className="w-[29px]" />
    <Rule />
    <span className="flex w-9 justify-center">
      <Svg w={26} h={12}>
        <circle cx="5" cy="6" r="5" fill="#b5b5b5" />
        <circle cx="15" cy="6" r="2.500" fill="#dadada" />
        <circle cx="22" cy="6" r="2.500" fill="#dadada" />
      </Svg>
    </span>
    <Rule />
    <button title="Notifications" className="flex w-10 pl-1.5">
      <Svg w={12} h={16}>
        <path d="M1 0v16" stroke="#bbb" strokeWidth="2" />
        <path d="M2 0l10 4-10 4z" fill="#aaa" />
      </Svg>
    </button>
    <Rule />
    <button title="Find" className="mr-1 ml-[3px] flex h-[23px] w-10 items-center justify-center rounded-xs border border-[#d5d6d9] bg-[#ebecee]">
      <Svg>
        <path d="M3 1h3v3h1V3h2v1h1V1h3v3l3 8v4h-6v-5H7v5H0v-4l3-8z" fill="#8f8f8f" />
        <path d="M4 5l-2 7M10 5v6" stroke="#ccc" />
      </Svg>
    </button>
    <Rule />
    <span className="w-[97px] pl-[3px]">1 selected</span>
    <div className="relative mr-[18px]">
      <select aria-label="Selection filter" className="block h-[21px] w-[154px] appearance-none border border-[#c3c5c8] bg-gradient-to-b from-white to-[#eeeff1] pl-2 outline-none">
        <option>All</option>
      </select>
      <span className="pointer-events-none absolute inset-y-px right-px flex w-3.5 items-center justify-center border-l border-[#c3c5c8]">
        <Caret />
      </span>
    </div>
  </footer>
);

/* ---------- Windows taskbar ---------- */

const Pinned: React.FC<Children & { title: string }> = ({ title, children }) => (
  <button title={title} className="flex w-[62px] items-center justify-center">{children}</button>
);

const Taskbar = () => (
  <div className="flex h-10 shrink-0 bg-[linear-gradient(90deg,#5e5a70_0%,#5a5a70_24%,#6f566b_32%,#805f74_43%,#8a7186_62%,#88708a_75%,#7b6075_90%,#8b6c80_100%)] font-['Open_Sans',sans-serif] text-xs text-white">
    <button title="Start" className="flex w-[50px] items-center justify-center">
      <Svg w={27} h={26}>
        <path d="M0 4l11.500-2v10.500H0zM13 1.700L27 0v12.500H13zM0 14h11.500v10L0 22.500zM13 14h14v12l-14-1.800z" fill="#fff" />
      </Svg>
    </button>
    <Pinned title="Word">
      <Svg w={24} h={30}>
        <path d="M1 3l18 2v24L1 26z" fill="#dcb088" />
        <path d="M1 3l4-2 18 1-4 3z" fill="#c9986d" />
        <path d="M19 5l4-3v22l-4 5z" fill="#a8744a" />
        <path d="M3 10h4l1 7 3-7h2l1 7 3-8h3l-5 14h-3l-2-6-2 5H6z" fill="#1c6496" />
      </Svg>
    </Pinned>
    <Pinned title="CCleaner">
      <Svg w={32} h={30}>
        <path d="M29 7A10.500 10.500 0 1 0 29 24" stroke="#c3362b" strokeWidth="7" />
        <path d="M20 2l2 1-5 11-3-1z" fill="#2c79b5" />
        <path d="M11 11l8 4-1 5-9-5z" fill="#3f93cf" />
        <path d="M8 14l10 5-3 11C8 28 3 25 0 20z" fill="#ecc79b" />
      </Svg>
    </Pinned>
    <Pinned title="Internet Explorer">
      <Svg w={30} h={30}>
        <path d="M25.500 21A10 10 0 1 1 26 16.500H10" stroke="#4fbdf0" strokeWidth="5" />
        <path d="M8 27c-9 4-8-3-4-10C9 7 20-1 27 2c3 1 2 4 1 7" stroke="#f1c72f" strokeWidth="2.200" />
      </Svg>
    </Pinned>
    <Pinned title="File Explorer">
      <Svg w={34} h={30}>
        <path d="M1 5l2-4h8l2 3h8l1 2h9v22H1z" fill="#e8c968" />
        <path d="M5 2h5v3H5z" fill="#3f9a4d" />
        <path d="M13 4h5v3h-5z" fill="#c9503c" />
        <path d="M21 6h6v3h-6z" fill="#3f86c9" />
        <path d="M2 8h30v20H2z" fill="#f8e9a6" stroke="#cfae4f" />
        <path d="M7 29V19h20v10" stroke="#7cc8ea" strokeWidth="4" />
        <path d="M8 18h18" stroke="#cdeaf7" />
      </Svg>
    </Pinned>
    <button className="mx-[2px] mt-px mb-[2px] flex w-[158px] items-center gap-1 border border-white/40 bg-white/20 pl-2.5">
      <svg width="30" height="30" viewBox="0 0 30 30" aria-hidden="true">
        <circle cx="14" cy="15" r="14" fill="#e9c11c" />
        <path d="M14 15L2 8C7-2 24-1 27 9H14z" fill="#d9382c" />
        <path d="M14 15v14C3 29-3 17 2 8l6 10z" fill="#3fa648" />
        <circle cx="14" cy="15" r="6.500" fill="#fff" />
        <circle cx="14" cy="15" r="5" fill="#3f7fd9" />
        <path d="M15 15h15v15H15z" fill="#b7a48c" />
        <circle cx="22" cy="19" r="3" fill="#5a3b29" />
        <path d="M17 30q1-7 5-7t6 7z" fill="#eef2f7" />
      </svg>
      Start New Discuss...
    </button>
    <Pinned title="Firefox">
      <Svg w={30} h={31}>
        <circle cx="16" cy="14" r="12" fill="#2b5fa8" />
        <path d="M14 2c7-1 14 5 13 13-3-6-6-7-10-6z" fill="#48b5e8" />
        <path d="M2 7l3 2 6-3-1 4 4 3-4 2c1 6 9 6 12 1 3-5 2-9 0-13 6 3 8 9 7 15-4 16-25 17-28 1-1-5-1-8 1-12z" fill="#e8661e" />
        <path d="M24 5c6 6 5 15-1 20 3-7 4-13 1-20z" fill="#f8c53a" />
      </Svg>
    </Pinned>
    <Pinned title="Media Player">
      <Svg w={28} h={27}>
        <path d="M5 1h21v24H5z" fill="#6aaed0" stroke="#a4d6ec" />
        <path d="M1 2h20v23l-20-1z" fill="#9ccfe6" stroke="#c8e6f4" />
        <circle cx="11" cy="13.500" r="9" fill="#ee7e22" stroke="#f6b77c" />
        <path d="M8 8l9 5.500L8 19z" fill="#fff" />
      </Svg>
    </Pinned>
    <Pinned title="KMPlayer">
      <Svg w={32} h={30}>
        <path d="M0 1l22 14L0 29z" fill="#9a82d6" />
        <path d="M0 29V13l22 2z" fill="#4a2d9c" />
        <path d="M32 1v28L19 19l3-4-3-4z" fill="#cdc6dc" />
      </Svg>
    </Pinned>
    <button className="mx-[2px] mt-px mb-[2px] flex w-[158px] items-center gap-1 border border-white/90 bg-white/35 pl-2.5">
      <AppLogo size={30} />
      PRT0001 (Active) ...
    </button>
    <div className="mr-[17px] ml-auto flex items-center">
      <button title="Show hidden icons" className="mr-3">
        <Svg w={8} h={5}><path d="M0 5h8L4 0z" fill="#fff" /></Svg>
      </button>
      <button title="Action Center" className="mr-[9px]">
        <Svg w={16} h={16}>
          <path d="M1.500 0v16" stroke="#fff" strokeWidth="1.500" />
          <path d="M3 1h5l1 2h5v6H3z" fill="#fff" />
          <circle cx="11" cy="11" r="4.500" fill="#d92b2b" />
          <path d="M9 9l4 4M13 9l-4 4" stroke="#fff" strokeWidth="1.500" />
        </Svg>
      </button>
      <button title="Network" className="mr-[9px]">
        <Svg w={16} h={16}>
          <path d="M5 2.500h10.500v8H5M1 1h4v4H1zM3 5v9M7 14.500h7M10.500 11v3" stroke="#fff" strokeWidth="1.500" />
        </Svg>
      </button>
      <button title="Volume" className="mr-3.5">
        <Svg w={14} h={16}>
          <path d="M1 5h3l4-4v14l-4-4H1z" fill="#fff" />
          <path d="M11 4q3 4 0 8" stroke="#fff" />
        </Svg>
      </button>
      <button className="mr-4">ENG</button>
      <button className="w-[60px] text-center leading-[17px]">
        2:56 PM
        <br />
        14-Feb-15
      </button>
    </div>
  </div>
);

export default function App() {
  return (
    <div className="flex h-screen flex-col overflow-hidden bg-[#fbfbfd] font-['Liberation_Sans',Arial,sans-serif] text-[11px]">
      <TitleBar />
      <TabRow />
      <Ribbon />
      <main className="relative flex min-h-0 flex-1">
        <Sketch />
        <SidePanel />
        <div className="mr-1 flex flex-1 flex-col items-center pt-[7px]">
          <ViewToolbar />
        </div>
        <DimensionInput />
      </main>
      <StatusBar />
      <Taskbar />
    </div>
  );
}
